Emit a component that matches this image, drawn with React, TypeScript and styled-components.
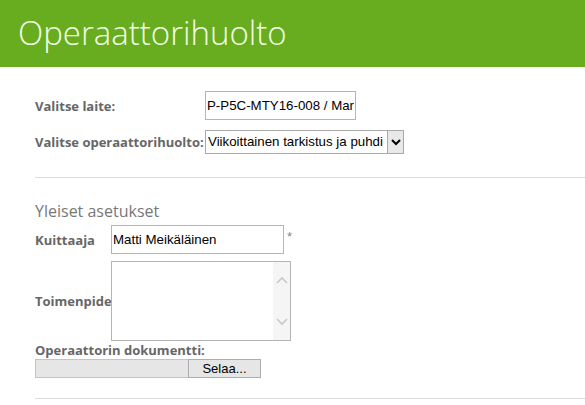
import React from "react";
import styled, { createGlobalStyle } from "styled-components";

const GlobalStyle = createGlobalStyle`
  html, body {
    margin: 0;
    padding: 0;
    background: #fff;
    overflow: hidden;
  }
  body {
    font-family: "Open Sans", "Liberation Sans", sans-serif;
  }
`;

const Header = styled.header`
  height: 67px;
  background: #67ad1f;
  display: flex;
  align-items: center;
  padding-left: 18px;
`;

const Title = styled.h1`
  margin: 0 0 2px;
  font-family: "Open Sans", sans-serif;
  font-weight: 300;
  font-size: 33px;
  color: #f4ffe6;
`;

const Content = styled.main`
  padding: 24px 0 0 35px;
`;

const Grid = styled.div`
  display: grid;
  grid-template-columns: 170px auto;
  row-gap: 10px;
  align-items: center;
  justify-items: start;
`;

const Label = styled.label`
  font-family: "Open Sans", sans-serif;
  font-weight: 700;
  font-size: 13px;
  color: #666;
  white-space: nowrap;
`;

const TextInput = styled.input<{ $w: number }>`
  box-sizing: border-box;
  width: ${(p) => p.$w}px;
  height: 29px;
  border: 1px solid #b5b5b5;
  padding: 0 1px;
  font-family: "Liberation Sans", Arial, sans-serif;
  font-size: 13.3px;
  color: #000;
  outline: none;
`;

const SelectBox = styled.div`
  display: flex;
  box-sizing: border-box;
  height: 24px;
  border: 1px solid #a9a9a9;
  background: #fff;
`;

const SelectText = styled.span`
  width: 178px;
  padding: 0 1px 0 2px;
  font-family: "Liberation Sans", Arial, sans-serif;
  font-size: 13.3px;
  line-height: 22px;
  white-space: nowrap;
  overflow: hidden;
  color: #000;
`;

const SelectArrow = styled.span`
  width: 15px;
  border-left: 1px solid #a9a9a9;
  background: #e8e8e8;
  display: flex;
  align-items: center;
  justify-content: center;
`;

const Divider = styled.hr`
  border: none;
  border-top: 1px solid #ddd;
  margin: 0;
`;

const Spacer = styled.div`
  height: 23px;
`;

const Section = styled.section`
  padding-top: 22px;
`;

const SectionTitle = styled.h2`
  margin: 0 0 3px;
  font-family: "Open Sans", sans-serif;
  font-weight: 400;
  font-size: 16px;
  color: #777;
`;

const FieldGrid = styled.div`
  display: grid;
  grid-template-columns: 76px auto;
  row-gap: 7px;
  align-items: center;
  justify-items: start;
`;

const Inline = styled.div`
  display: flex;
  align-items: center;
`;

const Required = styled.span`
  margin-left: 3px;
  margin-top: -6px;
  font-family: "Liberation Sans", Arial, sans-serif;
  font-size: 13px;
  color: #888;
`;

const AreaBox = styled.div`
  box-sizing: border-box;
  width: 180px;
  height: 80px;
  border: 1px solid #b5b5b5;
  display: flex;
  justify-content: flex-end;
`;

const ScrollTrack = styled.div`
  width: 17px;
  background: #f5f5f5;
  display: flex;
  flex-direction: column;
  justify-content: space-between;
  align-items: center;
  padding: 14px 0 14px;
`;

const DocLabel = styled(Label)`
  display: block;
  margin-top: 1px;
  line-height: 17px;
`;

const FileRow = styled.div`
  display: flex;
  height: 19px;
  margin-bottom: 20px;
`;

const FileField = styled.div`
  box-sizing: border-box;
  width: 153px;
  background: #e6e6e6;
  border: 1px solid #c4c4c4;
  border-right: none;
`;

const BrowseButton = styled.button`
  box-sizing: border-box;
  width: 73px;
  height: 19px;
  border: 1px solid #adadad;
  background: #e6e6e6;
  font-family: "Liberation Sans", Arial, sans-serif;
  font-size: 13px;
  padding: 0;
  color: #000;
`;

const Chevron = ({ up }: { up?: boolean }) => (
  <svg width="12" height="8" viewBox="0 0 12 8">
    <path
      d={up ? "M1 7 L6 2 L11 7" : "M1 1 L6 6 L11 1"}
      fill="none"
      stroke="#c8c8c8"
      strokeWidth="1.6"
    />
  </svg>
);

const App = () => (
  <>
    <GlobalStyle />
    <Header>
      <Title>Operaattorihuolto</Title>
    </Header>
    <Content>
      <Grid>
        <Label>Valitse laite:</Label>
        <TextInput $w={151} defaultValue="P-P5C-MTY16-008 / Mar" />
        <Label>Valitse operaattorihuolto:</Label>
        <SelectBox>
          <SelectText>Viikoittainen tarkistus ja puhdi</SelectText>
          <SelectArrow>
            <svg width="10" height="7" viewBox="0 0 10 7">
              <path d="M1 1 L5 5 L9 1" fill="none" stroke="#000" strokeWidth="2" />
            </svg>
          </SelectArrow>
        </SelectBox>
      </Grid>
      <Spacer />
      <Divider />
      <Section>
        <SectionTitle>Yleiset asetukset</SectionTitle>
        <FieldGrid>
          <Label>Kuittaaja</Label>
          <Inline>
            <TextInput $w={173} defaultValue="Matti Meikäläinen" />
            <Required>*</Required>
          </Inline>
          <Label>Toimenpide</Label>
          <AreaBox>
            <ScrollTrack>
              <Chevron up />
              <Chevron />
            </ScrollTrack>
          </AreaBox>
        </FieldGrid>
        <DocLabel>Operaattorin dokumentti:</DocLabel>
        <FileRow>
          <FileField />
          <BrowseButton>Selaa...</BrowseButton>
        </FileRow>
        <Divider />
      </Section>
    </Content>
  </>
);

export default App;
